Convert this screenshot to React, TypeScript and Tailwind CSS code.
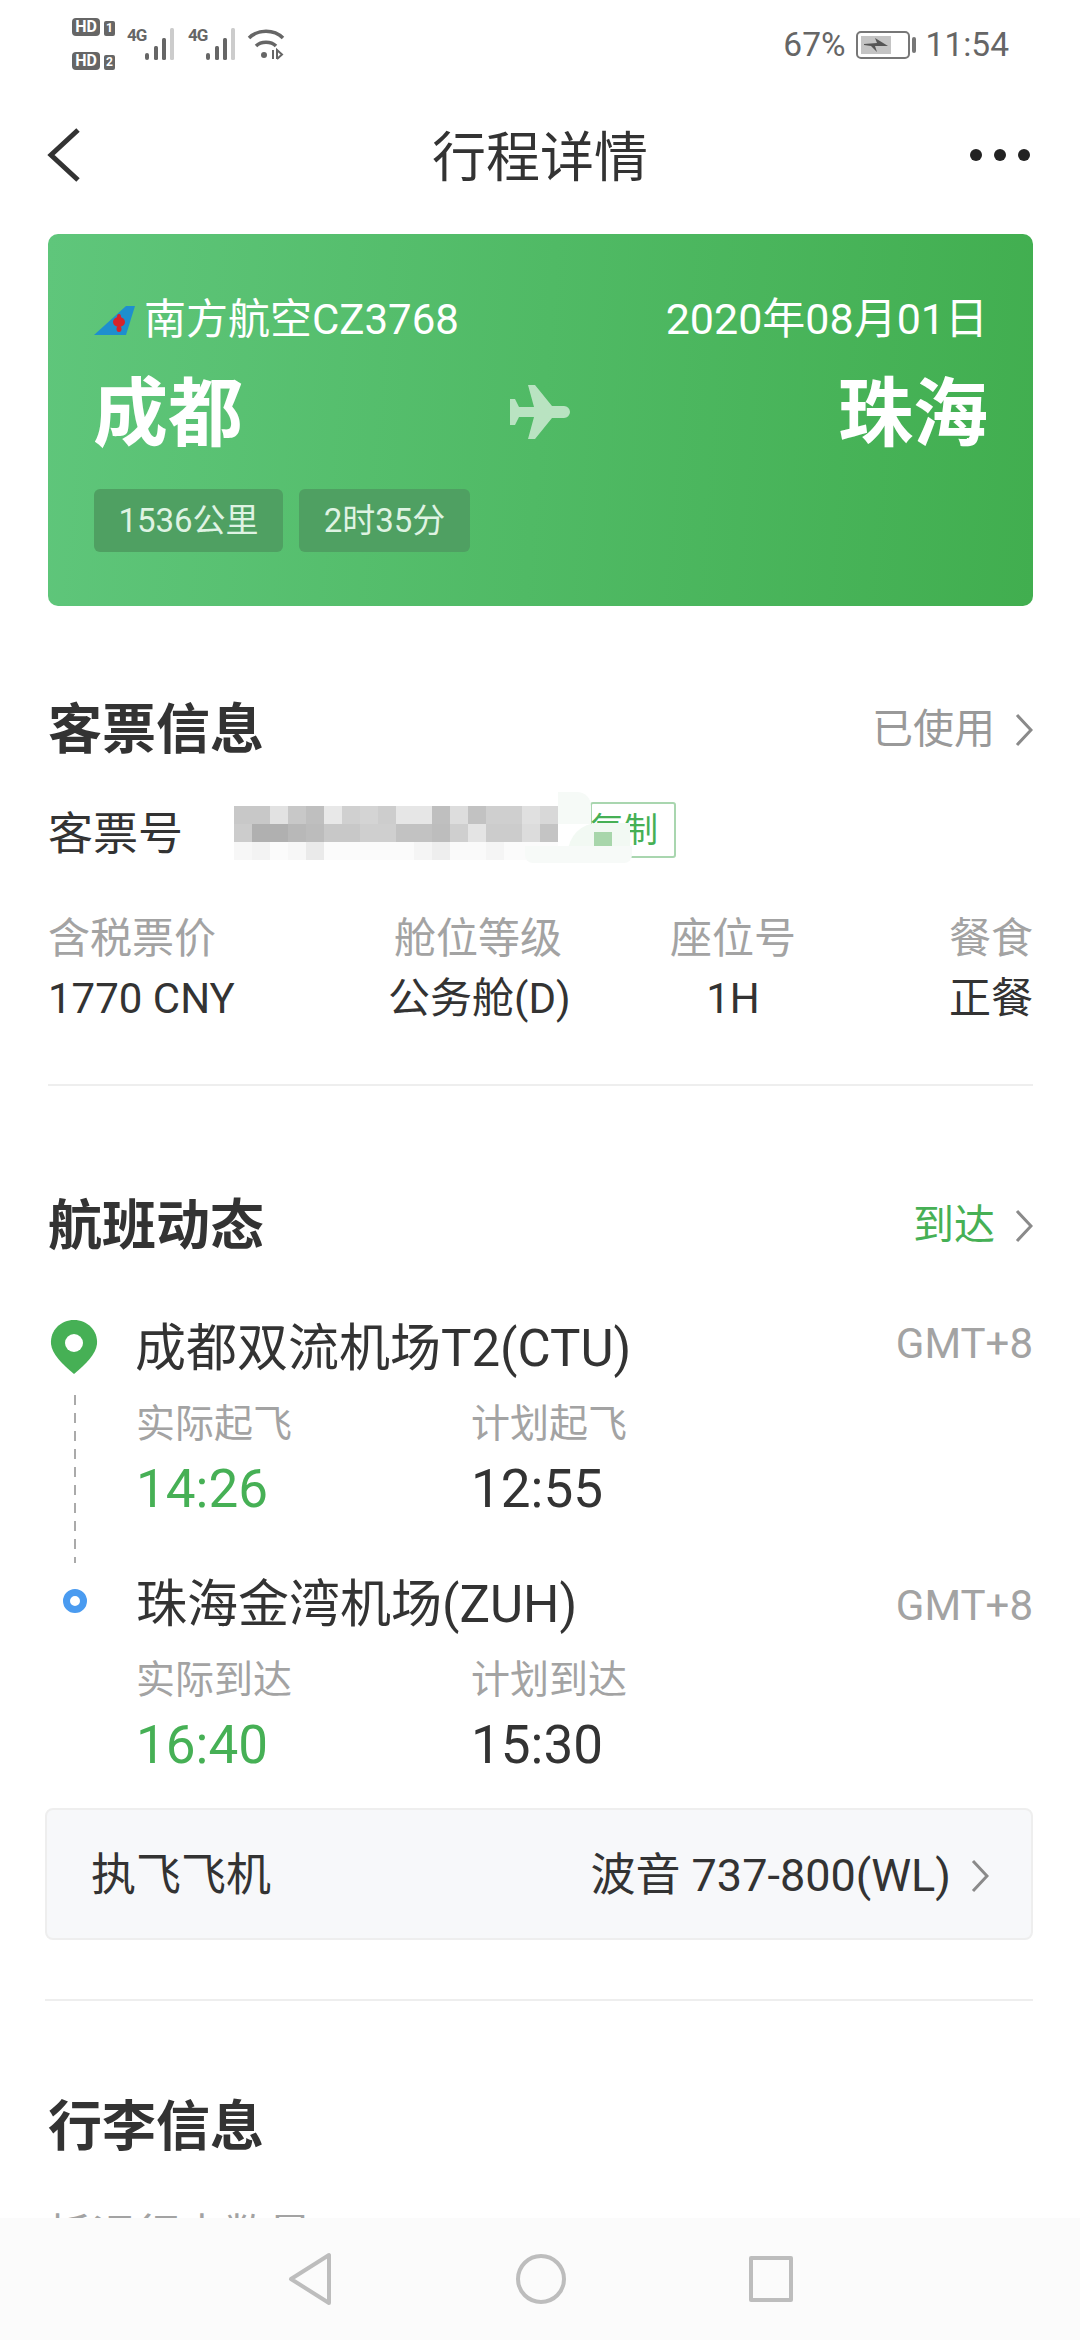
import React from "react";

const mosaic = [
  ["bg-[#c8c8c8]", "bg-[#c8c8c8]", "bg-[#e2e2e2]", "bg-[#c8c8c8]", "bg-[#bfbfbf]", "bg-[#e8e8e8]", "bg-[#d0d0d0]", "bg-[#d4d4d4]", "bg-[#cdcdcd]", "bg-[#e6e6e6]", "bg-[#e6e6e6]", "bg-[#bfbfbf]", "bg-[#dddddd]", "bg-[#c2c2c2]", "bg-[#cfcfcf]", "bg-[#cfcfcf]", "bg-[#e0e0e0]", "bg-[#d8d8d8]"],
  ["bg-[#cccccc]", "bg-[#b0b0b0]", "bg-[#b0b0b0]", "bg-[#b8b8b8]", "bg-[#bcbcbc]", "bg-[#c8c8c8]", "bg-[#c8c8c8]", "bg-[#cfcfcf]", "bg-[#cfcfcf]", "bg-[#c2c2c2]", "bg-[#c2c2c2]", "bg-[#bdbdbd]", "bg-[#cfcfcf]", "bg-[#e4e4e4]", "bg-[#cccccc]", "bg-[#cccccc]", "bg-[#dcdcdc]", "bg-[#c4c4c4]"],
  ["bg-[#f7f7f7]", "bg-[#f3f3f3]", "bg-[#fbfbfb]", "bg-[#f7f7f7]", "bg-[#eaeaea]", "bg-[#fbfbfb]", "bg-[#fbfbfb]", "bg-[#fbfbfb]", "bg-[#fbfbfb]", "bg-[#fbfbfb]", "bg-[#f5f5f5]", "bg-[#eeeeee]", "bg-[#fafafa]", "bg-[#fafafa]", "bg-[#f5f5f5]", "bg-[#fbfbfb]", "bg-[#fbfbfb]", "bg-[#fbfbfb]"],
];

const Chevron = ({ className = "" }: { className?: string }) => (
  <svg width="18" height="34" viewBox="0 0 18 34" fill="none" className={className}>
    <path d="M2 2 L16 17 L2 32" stroke="#8a8a8a" strokeWidth="3" />
  </svg>
);

const SignalBars = () => (
  <svg width="32" height="34" viewBox="0 0 32 34">
    <rect x="0" y="26" width="4" height="7" rx="2" fill="#666" />
    <rect x="9" y="19" width="4" height="14" rx="1.5" fill="#666" />
    <rect x="17" y="11" width="4" height="22" rx="1.5" fill="#666" />
    <rect x="25" y="1" width="4" height="32" rx="1.5" fill="#ccc" />
  </svg>
);

const StatusBar = () => (
  <div className="h-[90px] flex flex-row items-start pl-[72px] pr-[71px] text-[#666]">
    <div className="flex flex-col gap-[16px] pt-[18px] w-[46px]">
      <div className="flex flex-row items-end gap-[4px]">
        <span className="w-[28px] h-[18px] rounded-[4px] bg-[#666] text-white text-[16px] leading-[18px] font-bold text-center">HD</span>
        <span className="w-[11px] h-[15px] rounded-[2px] bg-[#666] text-white text-[12px] leading-[15px] font-bold text-center">1</span>
      </div>
      <div className="flex flex-row items-end gap-[4px]">
        <span className="w-[28px] h-[18px] rounded-[4px] bg-[#666] text-white text-[16px] leading-[18px] font-bold text-center">HD</span>
        <span className="w-[11px] h-[15px] rounded-[2px] bg-[#666] text-white text-[12px] leading-[15px] font-bold text-center">2</span>
      </div>
    </div>
    <div className="flex flex-row items-start ml-[9px] pt-[27px]">
      <span className="w-[18px] text-[17px] leading-[17px] font-bold tracking-[-1px] whitespace-nowrap">4G</span>
      <SignalBars />
      <span className="w-[18px] ml-[11px] text-[17px] leading-[17px] font-bold tracking-[-1px] whitespace-nowrap">4G</span>
      <SignalBars />
      <svg width="38" height="34" viewBox="0 0 38 34" fill="none" className="ml-[9px]">
        <path d="M2 11 C11 2 27 2 36 11" stroke="#666" strokeWidth="3.5" />
        <path d="M9 19 C14 14 24 14 29 19" stroke="#666" strokeWidth="3.5" />
        <circle cx="17" cy="28" r="3" fill="#666" />
        <path d="M26 23 L26 32 M30 32 L30 23 L35 27.5 L30 32" stroke="#666" strokeWidth="2" />
      </svg>
    </div>
    <div className="ml-auto flex flex-row items-center h-[90px] text-[33.5px]">
      <span>67%</span>
      <div className="ml-[10px] w-[54px] h-[28px] rounded-[5px] border-2 border-[#777] p-[3px] flex">
        <div className="w-[30px] h-full bg-[#c4c4c4] flex items-center justify-center">
          <svg width="24" height="14" viewBox="0 0 24 14">
            <path d="M0 6 L13 5 L11 0 L24 8 L11 8 L13 14 L7 8 L0 7 Z" fill="#555" />
          </svg>
        </div>
      </div>
      <div className="ml-[2px] w-[4px] h-[16px] rounded-[2px] bg-[#777]" />
      <span className="ml-[10px]">11:54</span>
    </div>
  </div>
);

const SectionHead = ({ title, children }: { title: string; children?: React.ReactNode }) => (
  <div className="h-[70px] pt-[6px] flex flex-row items-center justify-between">
    <h2 className="text-[54px] font-bold text-[#333]">{title}</h2>
    {children}
  </div>
);

const TimeCol = ({ label, time, green }: { label: string; time: string; green?: boolean }) => (
  <div className="w-[335px]">
    <p className="h-[50px] leading-[50px] text-[39px] text-[#a3a3a3]">{label}</p>
    <p className={`mt-[5px] h-[70px] leading-[70px] text-[53px] ${green ? "text-[#46b055]" : "text-[#333]"}`}>{time}</p>
  </div>
);

export default function App() {
  return (
    <div className="relative w-[1080px] h-[2340px] overflow-hidden bg-white font-['Roboto','Noto_Sans_CJK_SC',sans-serif]">
      <StatusBar />

      {/* nav */}
      <div className="h-[130px] pt-[6px] relative flex items-center justify-center">
        <svg width="34" height="54" viewBox="0 0 34 54" fill="none" className="absolute left-[47px] top-[38px]">
          <path d="M31 2 L4 27 L31 52" stroke="#333" strokeWidth="5" />
        </svg>
        <h1 className="text-[54px] text-[#333]">行程详情</h1>
        <div className="absolute right-[50px] top-[59px] flex flex-row gap-[12px]">
          <div className="w-[12px] h-[12px] rounded-full bg-[#222]" />
          <div className="w-[12px] h-[12px] rounded-full bg-[#222]" />
          <div className="w-[12px] h-[12px] rounded-full bg-[#222]" />
        </div>
      </div>

      <div className="pl-[48px] pr-[47px] pt-[14px]">
        {/* flight card */}
        <div className="h-[372px] rounded-[10px] pl-[46px] pr-[45px] pt-[60px] text-white bg-[linear-gradient(95deg,#5fc67b,#41ae4f)]">
          <div className="h-[50px] flex flex-row items-center justify-between text-[42px]">
            <div className="flex flex-row items-center">
              <svg width="41" height="29" viewBox="0 0 41 29" className="mr-[9px] mt-[2px]">
                <polygon points="0,29 32,0 41,0 32,29" fill="#1e8fce" />
                <ellipse cx="25" cy="16" rx="6" ry="5" fill="#d8232a" />
                <ellipse cx="25" cy="11" rx="2" ry="3" fill="#d8232a" />
                <ellipse cx="25" cy="23" rx="2.5" ry="3" fill="#d8232a" />
              </svg>
              <span>南方航空CZ3768</span>
            </div>
            <span className="text-[43px]">2020年08月01日</span>
          </div>
          <div className="mt-[23px] h-[90px] pt-[5px] relative flex flex-row items-center justify-between text-[75px] font-bold">
            <span className="-ml-[1px]">成都</span>
            <svg width="60" height="54" viewBox="0 0 60 54" className="absolute left-[416px] top-[18px] opacity-60">
              <path d="M0 14 L5 14 L9 22 L24 22 L18 0 L25 0 L42 21 L54 21 A6 6 0 0 1 54 33 L42 33 L25 54 L18 54 L24 32 L9 32 L5 40 L0 40 Z" fill="#fff" />
            </svg>
            <span>珠海</span>
          </div>
          <div className="mt-[32px] flex flex-row gap-[16px] text-[33px] text-[#dff3e3]">
            <span className="w-[189px] h-[63px] leading-[63px] text-center rounded-[6px] bg-[#4fa062]">1536公里</span>
            <span className="w-[171px] h-[63px] leading-[63px] text-center rounded-[6px] bg-[#4fa062]">2时35分</span>
          </div>
        </div>

        {/* ticket info */}
        <div className="mt-[86px]">
          <SectionHead title="客票信息">
            <div className="flex flex-row items-center gap-[20px] text-[41px] text-[#999]">
              <span>已使用</span>
              <Chevron />
            </div>
          </SectionHead>
          <div className="relative mt-[34px] h-[72px] flex flex-row items-center">
            <span className="w-[186px] mt-[6px] text-[45px] text-[#333]">客票号</span>
            <div className="flex flex-col mt-[2px]">
              {mosaic.map((row, i) => (
                <div key={i} className="flex flex-row h-[18px]">
                  {row.map((c, j) => (
                    <div key={j} className={`w-[18px] ${c}`} />
                  ))}
                </div>
              ))}
            </div>
            <div className="ml-[32px] w-[86px] h-[56px] mb-[4px] rounded-[3px] border-2 border-[#a9d6af] text-[34px] leading-[52px] text-[#46b055] text-right pr-[16px] whitespace-nowrap">
              <span className="-ml-[10px]">复制</span>
            </div>
            <div className="absolute left-[510px] top-[-4px] w-[33px] h-[32px] bg-[#f6faf7] rounded-tr-[14px]" />
            <div className="absolute left-[520px] top-[27px] w-[62px] h-[40px] bg-[#f2f9f3] rounded-tl-[30px] rounded-br-[14px]" />
            <div className="absolute left-[546px] top-[36px] w-[18px] h-[15px] bg-[#a8d6ab]" />
            <div className="absolute left-[477px] top-[50px] w-[107px] h-[17px] bg-[#f7faf8] rounded-b-[8px]" />
          </div>
          <div className="mt-[43px] flex flex-row">
            <div className="w-[185px]">
              <p className="h-[56px] leading-[56px] text-[42px] text-[#a3a3a3] whitespace-nowrap">含税票价</p>
              <p className="mt-[2px] h-[60px] leading-[60px] text-[42px] text-[#333] whitespace-nowrap">1770 CNY</p>
            </div>
            <div className="w-[180px] ml-[155px] text-center">
              <p className="h-[56px] leading-[56px] text-[42px] text-[#a3a3a3] whitespace-nowrap">舱位等级</p>
              <p className="mt-[2px] h-[60px] leading-[60px] text-[42px] text-[#333] whitespace-nowrap">公务舱(D)</p>
            </div>
            <div className="w-[126px] ml-[102px] text-center">
              <p className="h-[56px] leading-[56px] text-[42px] text-[#a3a3a3] whitespace-nowrap">座位号</p>
              <p className="mt-[2px] h-[60px] leading-[60px] text-[42px] text-[#333] whitespace-nowrap">1H</p>
            </div>
            <div className="flex-1 text-right">
              <p className="h-[56px] leading-[56px] text-[42px] text-[#a3a3a3] whitespace-nowrap">餐食</p>
              <p className="mt-[2px] h-[60px] leading-[60px] text-[42px] text-[#333] whitespace-nowrap">正餐</p>
            </div>
          </div>
          <div className="mt-[55px] h-[2px] bg-[#eeeeee]" />
        </div>

        {/* flight status */}
        <div className="mt-[102px]">
          <SectionHead title="航班动态">
            <div className="flex flex-row items-center gap-[20px] text-[41px] text-[#46b055]">
              <span>到达</span>
              <Chevron />
            </div>
          </SectionHead>
          <div className="mt-[54px] h-[256px] flex flex-row">
            <div className="w-[88px] flex flex-col pt-[8px]">
              <svg width="48" height="54" viewBox="0 0 48 54" className="ml-[2px]">
                <path d="M24 0 C37 0 48 10 47 24 C46 34 36 44 24 54 C12 44 2 34 1 24 C0 10 11 0 24 0 Z" fill="#46b055" />
                <circle cx="24" cy="23" r="9" fill="#fff" />
              </svg>
              <div className="mt-[21px] ml-[26px] w-[2px] h-[168px] bg-[repeating-linear-gradient(to_bottom,#aaaaaa_0,#aaaaaa_10px,transparent_10px,transparent_18px)]" />
            </div>
            <div className="flex-1">
              <div className="h-[70px] pt-[5px] flex flex-row items-center justify-between">
                <span className="text-[51px] -ml-[1px] text-[#333]">成都双流机场T2(CTU)</span>
                <span className="text-[42px] text-[#a3a3a3] mb-[12px]">GMT+8</span>
              </div>
              <div className="mt-[17px] flex flex-row">
                <TimeCol label="实际起飞" time="14:26" green />
                <TimeCol label="计划起飞" time="12:55" />
              </div>
            </div>
          </div>
          <div className="flex flex-row">
            <div className="w-[88px] pt-[21px]">
              <div className="ml-[15px] w-[24px] h-[24px] rounded-full border-[7px] border-[#4a9bf0] bg-white" />
            </div>
            <div className="flex-1">
              <div className="h-[70px] pt-[5px] flex flex-row items-center justify-between">
                <span className="text-[51px] text-[#333]">珠海金湾机场(ZUH)</span>
                <span className="text-[42px] text-[#a3a3a3]">GMT+8</span>
              </div>
              <div className="mt-[17px] flex flex-row">
                <TimeCol label="实际到达" time="16:40" green />
                <TimeCol label="计划到达" time="15:30" />
              </div>
            </div>
          </div>
          <div className="mt-[28px] -ml-[3px] h-[132px] pt-[4px] rounded-[8px] border-2 border-[#eeeeee] bg-[#f7f8fa] pl-[44px] pr-[42px] flex flex-row items-center justify-between text-[45px] text-[#333]">
            <span>执飞飞机</span>
            <div className="flex flex-row items-center gap-[20px]">
              <span>波音 737-800(WL)</span>
              <Chevron />
            </div>
          </div>
          <div className="mt-[59px] -ml-[3px] h-[2px] bg-[#eeeeee]" />
        </div>

        {/* baggage */}
        <div className="mt-[88px]">
          <SectionHead title="行李信息" />
          <div className="mt-[44px] flex flex-row items-center text-[44px]">
            <span className="text-[#a3a3a3]">托运行李数量</span>
            <span className="ml-[52px] text-[#333]">2</span>
          </div>
        </div>
      </div>

      {/* system nav */}
      <div className="absolute left-0 bottom-0 w-full h-[122px] bg-[#fbfbfb] flex flex-row items-center justify-center gap-[182px]">
        <svg width="46" height="54" viewBox="0 0 46 54" fill="none">
          <path d="M42 3 L42 51 L4 27 Z" stroke="#bdbdbd" strokeWidth="4" strokeLinejoin="round" />
        </svg>
        <svg width="52" height="52" viewBox="0 0 52 52" fill="none">
          <circle cx="26" cy="26" r="23" stroke="#bdbdbd" strokeWidth="4" />
        </svg>
        <div className="w-[44px] h-[46px] rounded-[2px] border-4 border-[#bdbdbd]" />
      </div>
    </div>
  );
}
